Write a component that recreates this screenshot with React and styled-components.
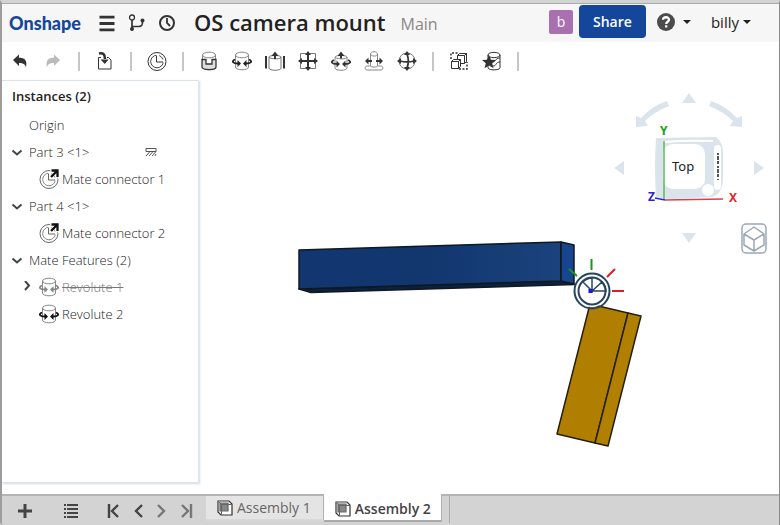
import React, { useState } from "react";
import styled, { createGlobalStyle } from "styled-components";

const colors = {
  ink: "#222",
  muted: "#777",
  blue: "#14469b",
  pale: "#dbe4ec",
  bar: "#d3d3d3",
};

const GlobalStyle = createGlobalStyle`
  *, *::before, *::after {
    box-sizing: border-box;
  }

  body {
    margin: 0;
    background: #d0d0d0;
    font-family: "Open Sans", "Noto Sans", sans-serif;
    color: ${colors.ink};
  }

  button {
    font: inherit;
    color: inherit;
    background: none;
    border: none;
    padding: 0;
    cursor: pointer;
  }

  svg {
    display: block;
  }
`;

const Window = styled.div`
  display: flex;
  flex-direction: column;
  min-height: 100vh;
  background: white;
  border-top: 3px solid #d2d4d2;
  border-left: 2px solid #9c9c9c;
  border-right: 1px solid #8a8a8a;
  border-bottom-left-radius: 4px;
  overflow: hidden;
`;

const Header = styled.header`
  display: flex;
  align-items: center;
  height: 39px;
  padding: 0 28px 0 7px;
  background: #f6f6f6;
  border-top: 1px solid #aaa;
  white-space: nowrap;
`;

const Logo = styled.a`
  width: 73px;
  font-family: "Lato", sans-serif;
  font-size: 18px;
  line-height: 24px;
  font-weight: 900;
  color: ${colors.blue};
  text-decoration: none;
`;

const HeaderIcons = styled.nav`
  display: flex;
  align-items: center;
  gap: 10px;
  margin-left: 15px;
`;

const IconButton = styled.button`
  display: flex;
  align-items: center;
  justify-content: center;
  width: 20px;
  height: 24px;
`;

const Title = styled.h1`
  margin: 0 0 2px 17px;
  font-size: 22px;
  line-height: 32px;
  font-weight: 600;
`;

const Branch = styled.span`
  margin: 2px auto 0 15px;
  font-size: 16px;
  line-height: 20px;
  color: #888;
`;

const Avatar = styled.span`
  width: 24px;
  height: 24px;
  margin: 0 6px 2px 0;
  border-radius: 2px;
  background: #a970b0;
  color: white;
  font-size: 14px;
  line-height: 24px;
  text-align: center;
`;

const ShareButton = styled.button`
  width: 67px;
  height: 33px;
  margin-bottom: 3px;
  border-radius: 4px;
  background: ${colors.blue};
  color: white;
  font-size: 14px;
  font-weight: 600;
`;

const MenuButton = styled.button`
  display: flex;
  align-items: center;
  gap: ${props => props.$gap};
  margin: 0 0 2px ${props => props.$offset};
  font-size: 15px;
  line-height: 20px;
`;

const Caret = styled.span`
  border: 4px solid transparent;
  border-top-color: ${colors.ink};
  border-bottom-width: 0;
`;

const Toolbar = styled.div`
  display: flex;
  align-items: center;
  height: 38px;
  padding-left: 1px;
`;

const Tool = styled.button`
  display: flex;
  align-items: center;
  justify-content: center;
  width: 33px;
  height: 30px;
`;

const Separator = styled.span`
  width: 2px;
  height: 19px;
  margin: 0 8px 0 9px;
  background: #c6c6c6;
`;

const Workspace = styled.main`
  display: flex;
  flex: 1;
  min-height: 0;
`;

const Panel = styled.aside`
  flex: 0 0 197px;
  margin-bottom: 11px;
  border: 1px solid ${colors.pale};
  border-left: none;
  box-shadow: 1px 1px 2px rgba(120, 140, 160, 0.3);
`;

const PanelTitle = styled.h2`
  margin: 0;
  padding-left: 10px;
  font-size: 13px;
  line-height: 30px;
  font-weight: 600;
`;

const Tree = styled.ul`
  list-style: none;
  margin: 0;
  padding: 0;
`;

const TreeRow = styled.li`
  display: flex;
  align-items: center;
  height: 27px;
  padding-left: ${props => (props.$depth ? "18px" : "8px")};
  color: ${props => (props.$suppressed ? colors.muted : colors.ink)};
`;

const Toggle = styled.button`
  display: flex;
  align-items: center;
  justify-content: center;
  width: 14px;
  height: 20px;
`;

const ToggleSpace = styled.span`
  width: 14px;
`;

const RowIcon = styled.span`
  margin-left: 5px;
`;

const RowName = styled.span`
  margin-left: ${props => (props.$icon ? "3px" : "5px")};
  font-size: 13px;
  line-height: 20px;
  font-weight: 300;
  white-space: nowrap;
  text-decoration: ${props => (props.$suppressed ? "line-through" : "none")};
`;

const Fixed = styled.span`
  margin-left: auto;
  margin-right: 41px;
`;

const Canvas = styled.section`
  position: relative;
  flex: 1;
  min-width: 0;
`;

const Scene = styled.svg`
  width: 100%;
  height: 100%;
`;

const ViewControls = styled.div`
  position: absolute;
  top: 0;
  right: 0;
`;

const ViewButton = styled.button`
  position: absolute;
  right: 11px;
  bottom: 6px;
`;

const Footer = styled.footer`
  display: flex;
  height: 31px;
  background: ${colors.bar};
  border-top: 2px solid #b4b4b4;
`;

const FooterTools = styled.div`
  display: flex;
  align-items: center;
  width: 204px;
  padding-left: 11px;
`;

const FooterButton = styled.button`
  display: flex;
  align-items: center;
  justify-content: center;
  width: 24px;
  height: 26px;
  margin-right: ${props => props.$after || "0"};
`;

const Tab = styled.button`
  display: flex;
  align-items: center;
  gap: 4px;
  height: ${props => (props.$active ? "28px" : "25px")};
  margin-top: ${props => (props.$active ? "-2px" : "0")};
  padding: ${props => (props.$active ? "3px 10px 0 11px" : "0 12px 0 11px")};
  background: ${props => (props.$active ? "white" : "#e4e4e4")};
  border-right: 1px solid #b0b0b0;
  border-bottom: 2px solid ${props => (props.$active ? "#aaa" : "#d8d8d8")};
  color: ${props => (props.$active ? "#444" : "#666")};
  font-size: 14px;
  font-weight: ${props => (props.$active ? 600 : 400)};
  white-space: nowrap;
`;

const TabEnd = styled.span`
  width: 1px;
  height: 27px;
  margin-left: 7px;
  background: #aaa;
`;

const Icon = ({ size = 20, children }) => (
  <svg width={size} height={size} viewBox="0 0 20 20" fill="none" stroke="#333" strokeWidth="1">
    {children}
  </svg>
);

const MenuIcon = () => (
  <Icon>
    <path d="M2.500 4.200h15M2.500 10.500h15M2.500 16.800h15" strokeWidth="2.800" />
  </Icon>
);

const BranchIcon = () => (
  <Icon>
    <circle cx="5" cy="4.500" r="2.500" strokeWidth="1.300" />
    <path d="M5 7v9M5 13.500h7c3 0 3.500-1.500 3.500-5" strokeWidth="1.700" />
    <circle cx="5" cy="16" r="2" fill="#333" stroke="none" />
    <circle cx="15.500" cy="7.500" r="2" fill="#333" stroke="none" />
  </Icon>
);

const HistoryIcon = () => (
  <Icon>
    <circle cx="10" cy="10" r="7" strokeWidth="2" />
    <path d="M10 5v5l3 3" strokeWidth="1.800" />
  </Icon>
);

const HelpIcon = () => (
  <svg width="18" height="18" viewBox="0 0 18 18" fill="none">
    <circle cx="9" cy="9" r="9" fill="#4c4c4c" />
    <path d="M6 6.700C6.200 3.400 12 3.400 12 6.700c0 2.100-2.800 2-2.800 4.200M9.200 12.300v2.200" stroke="white" strokeWidth="2.300" />
  </svg>
);

const UndoIcon = ({ color = "#333", flip }) => (
  <Icon>
    <path
      d="M3 9l6-5.500v3.300c5.500 0 8.500 2.200 7 9.700-.8-3.500-3-4.500-7-4.500v3z"
      fill={color}
      stroke="none"
      transform={flip ? "matrix(-1 0 0 1 20 0)" : undefined}
    />
  </Icon>
);

const InsertIcon = () => (
  <Icon>
    <path d="M6 6.500H3.500v11.500h12.500V9l-2.500-2.500H12" />
    <path d="M4 2.500c4-1 6 .5 6 5.500" strokeWidth="2.600" />
    <path d="M5.500 8.500h8L9.800 13z" fill="#333" stroke="none" />
  </Icon>
);

const MateConnectorIcon = ({ arrow }) => (
  <Icon>
    <circle cx="10" cy="10.500" r="9" stroke={arrow ? "#666" : "#333"} />
    <circle cx="10" cy="10.500" r="6.300" stroke={arrow ? "#888" : "#444"} />
    <path d="M10.500 3v7h7" stroke="white" strokeWidth="3" />
    <path d="M9.500 4.500V11H16" stroke={arrow ? "#666" : "#333"} />
    {arrow && (
      <>
        <path d="M11 0h9v9z" fill="white" stroke="white" strokeWidth="2" />
        <path d="M12.500 1.500H18.500v6.500M18 2l-6 6" stroke="#111" strokeWidth="2.300" />
      </>
    )}
  </Icon>
);

const Cylinder = ({ tone = "#888" }) => (
  <g stroke={tone}>
    <ellipse cx="10" cy="4" rx="6.500" ry="2.800" />
    <path d="M3.500 4v12c0 3.700 13 3.700 13 0V4" />
  </g>
);

const FastenedIcon = () => (
  <Icon>
    <Cylinder />
    <path d="M3 8.500h4v4.500h6V8.500h4v7.500c0 3.500-14 3.500-14 0z" fill="#ddd" strokeWidth="1.300" />
  </Icon>
);

const RevoluteIcon = ({ tone = "#222" }) => (
  <Icon>
    <Cylinder />
    <path d="M3 8.500c-4 2-2 4 3 4M17 8.500c4 2 2 4-3 4" stroke={tone} strokeWidth="1.800" />
    <path d="M5.500 9l3.500 3.500L5.500 16zM14.500 9L11 12.500l3.500 3.500z" fill={tone} stroke="none" />
  </Icon>
);

const SliderIcon = () => (
  <Icon>
    <path d="M4 6v11c0 3 12 3 12 0V6c0-2-12-2-12 0s12 3 12 0" stroke="#777" />
    <path d="M1 5v12.500M19 5v12.500" strokeWidth="2" />
    <path d="M10 8V3" strokeWidth="2" />
    <path d="M6.500 5L10 .5 13.500 5z" fill="#333" stroke="none" />
  </Icon>
);

const PlanarIcon = () => (
  <Icon>
    <path d="M2.500 2.500h15v15h-15z" stroke="#777" />
    <path d="M10 3v14M3 10h14" strokeWidth="2" />
    <path d="M7 4l3-4 3 4zM7 16l3 4 3-4zM4 7l-4 3 4 3zM16 7l4 3-4 3z" fill="#333" stroke="none" />
  </Icon>
);

const CylindricalIcon = () => (
  <Icon>
    <path d="M4 6v11c0 3 12 3 12 0V6c0-2-12-2-12 0s12 3 12 0" stroke="#888" />
    <path d="M3 9c-4 2-2 4 3 4M17 9c4 2 2 4-3 4" strokeWidth="1.800" />
    <path d="M5.500 9.500L9 13l-3.500 3.500zM14.500 9.500L11 13l3.500 3.500zM6.500 5L10 .5 13.500 5z" fill="#333" stroke="none" />
    <path d="M10 4v3.500" strokeWidth="2" />
  </Icon>
);

const PinSlotIcon = () => (
  <Icon>
    <path d="M6.500 3v12M13.500 3v12M6.500 3c0-3 7-3 7 0s-7 2.500-7 0M6.500 15H3c-2.500 0-2.500 4 0 4h14c2.500 0 2.500-4 0-4h-3.500c-1 1.500-6 1.500-7 0" stroke="#888" />
    <path d="M3 10h5M12 10h5" strokeWidth="1.800" />
    <path d="M4.500 6.500L1 10l3.500 3.500zM15.500 6.500L19 10l-3.500 3.500z" fill="#333" stroke="none" />
  </Icon>
);

const BallIcon = () => (
  <Icon>
    <circle cx="10" cy="10" r="8" stroke="#777" />
    <path d="M10 3c1.500 4 1.500 10 0 14M3 10c4 1 10 1 14 0" strokeWidth="1.800" />
    <path d="M7 4l3-4 3 4zM7 16l3 4 3-4zM4 7l-4 3 4 3zM16 7l4 3-4 3z" fill="#333" stroke="none" />
  </Icon>
);

const GroupIcon = () => (
  <Icon>
    <path d="M2 8V2h7M10 18h8v-7" strokeWidth="1.500" strokeDasharray="2 1.500" />
    <path d="M8.500 4.500l2-2h7v8l-2 2h-7zM8.500 4.500h7v8M15.500 4.500l2-2" />
    <path d="M2.500 10.500l2-2h7v7l-2 2h-7z" fill="white" />
    <path d="M2.500 10.500h7v7M9.500 10.500l2-2" />
  </Icon>
);

const FavoriteIcon = () => (
  <Icon>
    <path d="M6 4c0-3.500 12-3.500 12 0s-12 3.500-12 0v13c1 2.500 11 2.500 12 0V4M10 11c4 0 3-4 8-4M11 15c4 0 2-4 7-4" />
    <path d="M7 4l2 4.700 5 .3-3.800 3.200 1.300 5L7 14.500l-4.500 2.700 1.300-5L0 9l5-.3z" fill="#333" stroke="none" />
  </Icon>
);

const FixedIcon = () => (
  <svg width="12" height="10" viewBox="0 0 12 10" fill="none" stroke="#555">
    <path d="M1 1.500h10v3H1zM1 9l4-4.500M4 9l4-4.500M7 9l4-4.500M10 9l1-2" />
  </svg>
);

const Chevron = ({ open }) => (
  <svg width="12" height="12" viewBox="0 0 12 12" fill="none" stroke="#444" strokeWidth="2">
    <path d={open ? "M1.500 4.500L6 8.500l4.500-4" : "M4 0L8 4.500 4 9"} />
  </svg>
);

const TabIcon = () => (
  <svg width="16" height="16" viewBox="0 0 16 16" fill="white" stroke="#333" strokeWidth="1.200">
    <path d="M1 1h11l3 3v11H4l-3-3z" />
    <path d="M3 3h8v8H3z" fill="#888" stroke="#666" />
    <path d="M1 1l3.500 3.500H15M4.500 4.500V15" fill="none" stroke="#666" strokeWidth="1" />
  </svg>
);

// step arrows in the footer, with an optional stop bar
const StepIcon = ({ forward, end, color }) => (
  <svg width="16" height="16" viewBox="0 0 16 16" fill="none" stroke={color} strokeWidth="2.400">
    <g transform={forward ? "matrix(-1 0 0 1 16 0)" : undefined}>
      <path d="M12 2L6 8l6 6" />
      {end && <path d="M3 1v14" />}
    </g>
  </svg>
);

const toolGroups = [
  [
    ["Undo", <UndoIcon />],
    ["Redo", <UndoIcon color="#bbb" flip />],
  ],
  [["Insert", <InsertIcon />]],
  [["Mate connector", <MateConnectorIcon />]],
  [
    ["Fastened mate", <FastenedIcon />],
    ["Revolute mate", <RevoluteIcon />],
    ["Slider mate", <SliderIcon />],
    ["Planar mate", <PlanarIcon />],
    ["Cylindrical mate", <CylindricalIcon />],
    ["Pin slot mate", <PinSlotIcon />],
    ["Ball mate", <BallIcon />],
  ],
  [
    ["Group", <GroupIcon />],
    ["Mate favorites", <FavoriteIcon />],
  ],
];

const instances = [
  { name: "Origin" },
  { name: "Part 3 <1>", toggle: "open", fixed: true },
  { name: "Mate connector 1", depth: 1, icon: <MateConnectorIcon arrow /> },
  { name: "Part 4 <1>", toggle: "open" },
  { name: "Mate connector 2", depth: 1, icon: <MateConnectorIcon arrow /> },
  { name: "Mate Features (2)", toggle: "open" },
  { name: "Revolute 1", depth: 1, toggle: "closed", icon: <RevoluteIcon tone="#888" />, suppressed: true },
  { name: "Revolute 2", depth: 1, icon: <RevoluteIcon tone="#111" /> },
];

const InstanceRow = ({ item }) => (
  <TreeRow $depth={item.depth} $suppressed={item.suppressed}>
    {item.toggle ? (
      <Toggle aria-label={`Toggle ${item.name}`}>
        <Chevron open={item.toggle === "open"} />
      </Toggle>
    ) : (
      <ToggleSpace />
    )}
    {item.icon && <RowIcon>{item.icon}</RowIcon>}
    <RowName $icon={item.icon} $suppressed={item.suppressed}>{item.name}</RowName>
    {item.fixed && <Fixed><FixedIcon /></Fixed>}
  </TreeRow>
);

const Model = () => (
  <Scene viewBox="0 -1 580 414" role="img" aria-label="Assembly model">
    <defs>
      <linearGradient id="steel" x1="0" y1="0" x2="1" y2="0">
        <stop offset="0" stopColor="#12366f" />
        <stop offset="0.500" stopColor="#12376f" />
        <stop offset="1" stopColor="#1b427d" />
      </linearGradient>
    </defs>
    <g stroke="#101820" strokeWidth="1.500" strokeLinejoin="round">
      <path d="M100 208l12 3.500 264-8-14-3.500z" fill="#0a2144" />
      <path d="M100 169l262-8v39l-262 8z" fill="url(#steel)" />
      <path d="M362 161l13 3v39l-13-3z" fill="#17458f" />
    </g>
    <g stroke="#242008" strokeWidth="1.500" strokeLinejoin="round">
      <path d="M391 223l38 9-33 130-38-9z" fill="#b07f02" />
      <path d="M429 232l13 3-33 130-13-3z" fill="#b28000" />
    </g>
    <circle cx="393" cy="210" r="16" fill="white" />
    <g fill="none" stroke="#27445f">
      <circle cx="393" cy="210" r="17.500" strokeWidth="2" />
      <circle cx="393" cy="210" r="13.500" strokeWidth="2" />
      <path d="M393 210v-13q-5 0-9 4zM393 210l10-9q4 4 4 9z" strokeWidth="1.500" />
    </g>
    <path d="M389.500 208h4v4h-4z" fill="#1a16d8" />
    <path d="M392.500 178v11M370 188l8 7" stroke="#169b16" strokeWidth="2" />
    <path d="M408 196l8-8M413 210h12" stroke="#e01c2c" strokeWidth="2" />
  </Scene>
);

const ViewCube = () => (
  <svg width="180" height="180" viewBox="-1 0 180 180" role="img" aria-label="View cube">
    <g fill={colors.pale}>
      <path d="M89 13l7 10H82zM89 163l7-10H82zM14 88l10-7v14zM164 88l-10-7v14z" />
      <path d="M67 21l2 5q-15 6-24 15l3 5-12 1V36l5 2q11-12 26-17z" />
      <path d="M111 21l-2 5q15 6 24 15l-3 5 12 1V36l-5 2q-11-12-26-17z" />
      <path d="M56 58l60-1q6 5 7 13v32q-2 13-11 15l-44 2-12-2q-2-30 0-59z" />
    </g>
    <path d="M63 62q25-2 50-1" stroke="white" strokeWidth="2" fill="none" />
    <rect x="63" y="64" width="42" height="45" rx="10" fill="white" />
    <rect x="114" y="65" width="7" height="45" rx="4" fill="white" />
    <circle cx="108" cy="110" r="6" fill="white" />
    <path d="M64 61v59" stroke="#58bd58" strokeWidth="1.500" />
    <path d="M65 120l58-1" stroke="#d8424a" strokeWidth="1.500" />
    <path d="M55 118l10 2" stroke="#2a24d8" strokeWidth="1.500" />
    <text x="72" y="91" fontFamily="Noto Sans" fontSize="13" fill="#222">Top</text>
    <path d="M118 73v27" stroke="#555" strokeWidth="2" strokeDasharray="2 1 4 1 3 2" />
    <g fontFamily="Noto Sans" fontSize="12" fontWeight="700">
      <text x="60" y="55" fill="#16a016">Y</text>
      <text x="48" y="121" fill="#2a24d8">Z</text>
      <text x="129" y="122" fill="#e02430">X</text>
    </g>
  </svg>
);

const App = () => {
  const [activeTab, setActiveTab] = useState("Assembly 2");

  return (
    <>
      <GlobalStyle />
      <Window>
        <Header>
          <Logo href="#">Onshape</Logo>
          <HeaderIcons>
            <IconButton aria-label="Menu"><MenuIcon /></IconButton>
            <IconButton aria-label="Versions"><BranchIcon /></IconButton>
            <IconButton aria-label="History"><HistoryIcon /></IconButton>
          </HeaderIcons>
          <Title>OS camera mount</Title>
          <Branch>Main</Branch>
          <Avatar>b</Avatar>
          <ShareButton>Share</ShareButton>
          <MenuButton $gap="8px" $offset="11px" aria-label="Help"><HelpIcon /><Caret /></MenuButton>
          <MenuButton $gap="4px" $offset="20px">billy<Caret /></MenuButton>
        </Header>
        <Toolbar role="toolbar">
          {toolGroups.map((group, i) => (
            <React.Fragment key={i}>
              {group.map(([label, icon]) => (
                <Tool key={label} aria-label={label}>{icon}</Tool>
              ))}
              <Separator />
            </React.Fragment>
          ))}
        </Toolbar>
        <Workspace>
          <Panel>
            <PanelTitle>Instances (2)</PanelTitle>
            <Tree>
              {instances.map(item => <InstanceRow key={item.name} item={item} />)}
            </Tree>
          </Panel>
          <Canvas>
            <Model />
            <ViewControls>
              <ViewCube />
              <ViewButton aria-label="View options">
                <svg width="28" height="31" viewBox="0 0 28 31" fill="none" stroke="#9aa8b6" strokeWidth="1.500" strokeLinejoin="round">
                  <rect x="2" y="1" width="24" height="29" rx="4" />
                  <path d="M14 4l10 7v11l-10 6-10-6V11zM4 11l10 6 10-6M14 17v11" />
                </svg>
              </ViewButton>
            </ViewControls>
          </Canvas>
        </Workspace>
        <Footer>
          <FooterTools>
            <FooterButton aria-label="Add tab" $after="22px">
              <svg width="14" height="14" viewBox="0 0 14 14" stroke="#444" strokeWidth="3">
                <path d="M7 0v14M0 7h14" />
              </svg>
            </FooterButton>
            <FooterButton aria-label="Tab list" $after="19px">
              <svg width="14" height="14" viewBox="0 0 14 14" stroke="#444" strokeWidth="2">
                <path d="M0 1h2M0 5h2M0 9h2M0 13h2M3 1h11M3 5h11M3 9h11M3 13h11" />
              </svg>
            </FooterButton>
            <FooterButton aria-label="First tab"><StepIcon end color="#444" /></FooterButton>
            <FooterButton aria-label="Previous tab"><StepIcon color="#444" /></FooterButton>
            <FooterButton aria-label="Next tab"><StepIcon forward color="#777" /></FooterButton>
            <FooterButton aria-label="Last tab"><StepIcon forward end color="#777" /></FooterButton>
          </FooterTools>
          {["Assembly 1", "Assembly 2"].map(name => (
            <Tab key={name} $active={name === activeTab} onClick={() => setActiveTab(name)}>
              <TabIcon />
              {name}
            </Tab>
          ))}
          <TabEnd />
        </Footer>
      </Window>
    </>
  );
};

export default App;
